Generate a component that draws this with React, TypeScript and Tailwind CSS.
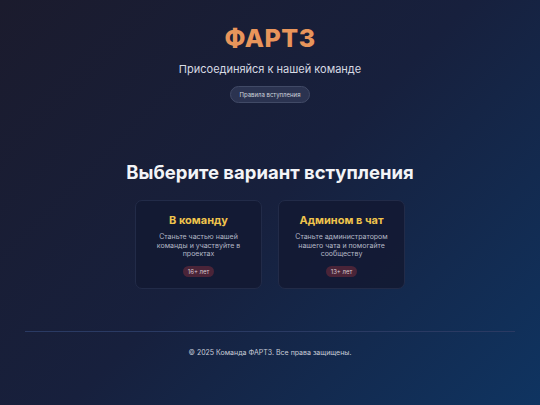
import React from 'react'

const cards = [
  { title: 'В команду', text: 'Станьте частью нашей команды и участвуйте в проектах', age: '16+ лет' },
  { title: 'Админом в чат', text: 'Станьте администратором нашего чата и помогайте сообществу', age: '13+ лет' },
]

export default function App() {
  return (
    <div
      className="min-h-[405px] w-full flex flex-col items-center bg-[linear-gradient(135deg,#1b1b2d_0%,#17203d_50%,#0f3461_100%)] text-white"
      style={{ fontFamily: 'Inter, "Noto Sans", sans-serif' }}
    >
      <header className="flex flex-col items-center pt-[24px]">
        <h1 className="text-[25px] leading-[28px] font-extrabold text-[#e8955b] tracking-[0.5px]">ФАРТЗ</h1>
        <p className="mt-[10px] text-[11px] leading-[14px] text-[#d7dae3]">Присоединяйся к нашей команде</p>
        <button className="mt-[10px] h-[17px] w-[80px] rounded-full bg-[#2b3350] border border-[#414a66] text-[6px] text-[#cfd3dd]">
          Правила вступления
        </button>
      </header>

      <main className="flex flex-col items-center pt-[58px]">
        <h2 className="text-[18.5px] leading-[22px] font-bold text-[#f3f4f7]">Выберите вариант вступления</h2>
        <div className="mt-[17px] flex gap-[16px]">
          {cards.map((c) => (
            <div
              key={c.title}
              className="w-[127px] h-[89px] rounded-[7px] bg-[#131a33]/90 border border-[#222b48] flex flex-col items-center pt-[12px] px-[14px]"
            >
              <h3 className="text-[11px] leading-[14px] font-bold text-[#f0c44c]">{c.title}</h3>
              <p className="mt-[6px] text-[7px] leading-[8.5px] text-[#b3b8c6] text-center">{c.text}</p>
              <span className="mt-[7px] h-[11px] px-[5px] rounded-full bg-[#4a2438] text-[6px] leading-[11px] text-[#d6c8d0]">
                {c.age}
              </span>
            </div>
          ))}
        </div>
      </main>

      <footer className="w-full px-[25px] mt-[42px]">
        <div className="border-t border-[#2a3a63]" />
        <p className="mt-[16px] text-center text-[7px] leading-[10px] text-[#c9cdd8]">© 2025 Команда ФАРТЗ. Все права защищены.</p>
      </footer>
    </div>
  )
}
